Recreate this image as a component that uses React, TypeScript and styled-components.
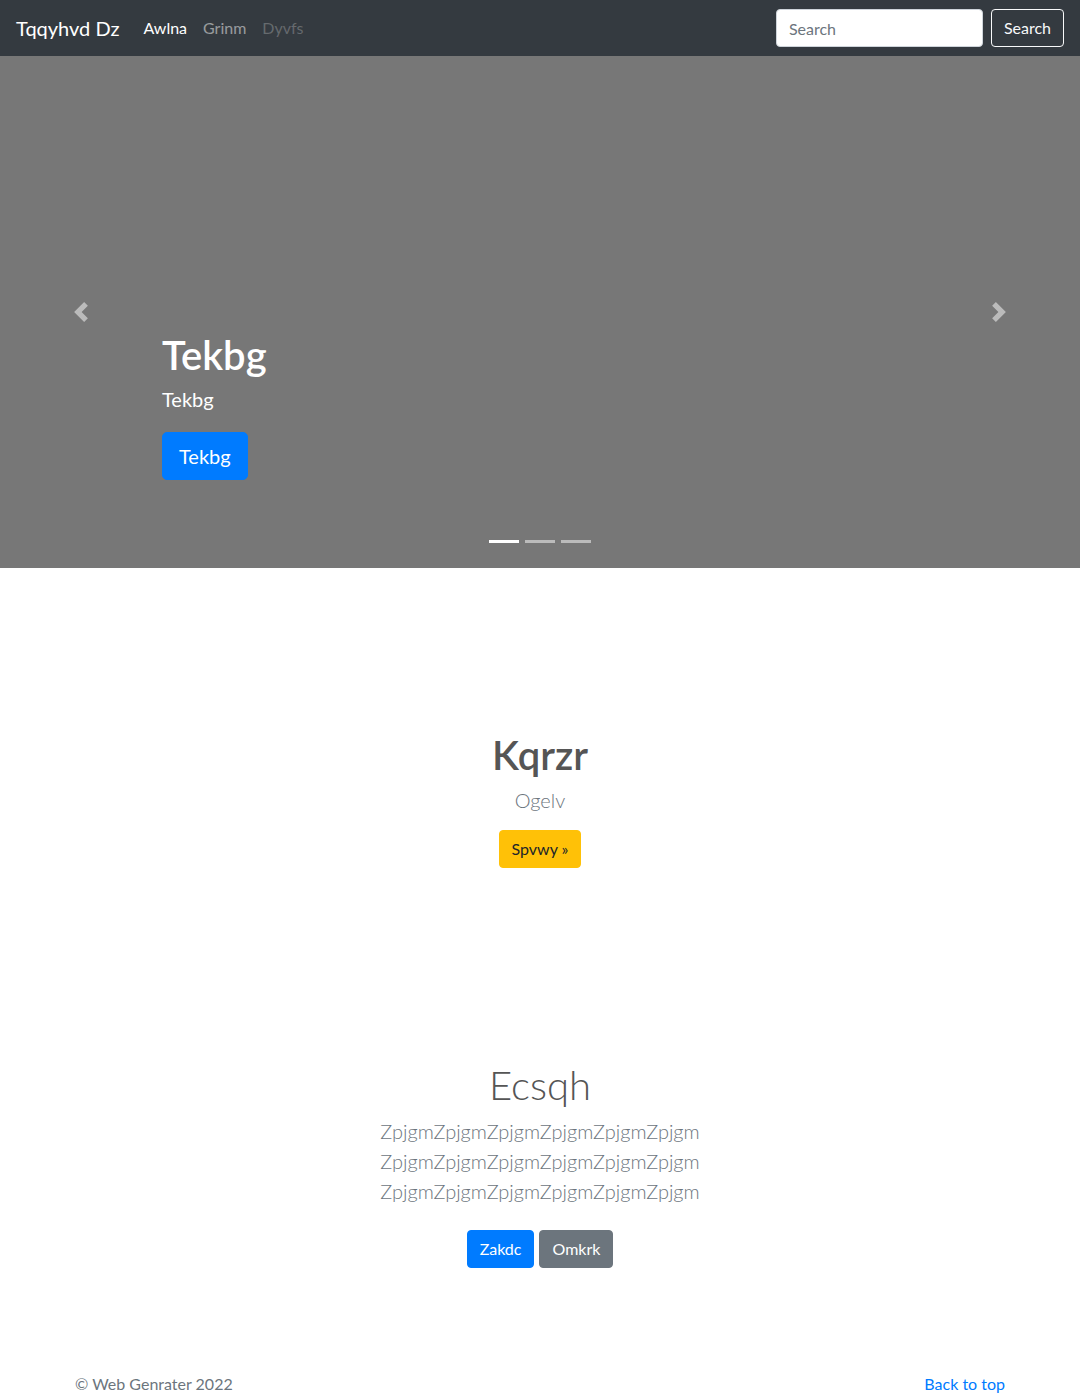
import React from 'react';
import styled, { createGlobalStyle, css } from 'styled-components';

const GlobalStyle = createGlobalStyle`
  * { box-sizing: border-box; }
  body {
    margin: 0;
    font-family: Lato, "Noto Sans", "Liberation Sans", sans-serif;
    font-size: 16px;
    line-height: 1.5;
    color: #212529;
    background: #fff;
  }
`;

const Navbar = styled.nav`
  height: 56px;
  background: #343a40;
  padding: 8px 16px;
  display: flex;
  align-items: center;
  justify-content: space-between;
`;

const NavLeft = styled.div`
  display: flex;
  align-items: center;
`;

const Brand = styled.a`
  color: #fff;
  font-size: 20px;
  line-height: 30px;
  margin-right: 16px;
  text-decoration: none;
`;

const NavLink = styled.a<{ $state?: 'active' | 'disabled' }>`
  padding: 8px;
  text-decoration: none;
  color: rgba(255, 255, 255, 0.5);
  ${({ $state }) =>
    $state === 'active' &&
    css`
      color: #fff;
    `}
  ${({ $state }) =>
    $state === 'disabled' &&
    css`
      color: rgba(255, 255, 255, 0.25);
    `}
`;

const SearchForm = styled.form`
  display: flex;
  align-items: center;
  gap: 8px;
`;

const SearchInput = styled.input`
  width: 207px;
  height: 38px;
  padding: 6px 12px;
  font: inherit;
  color: #495057;
  border: 1px solid #ced4da;
  border-radius: 4px;
  background: #fff;
  &::placeholder { color: #6c757d; }
`;

const OutlineButton = styled.button`
  height: 38px;
  padding: 6px 12px;
  font: inherit;
  color: #f8f9fa;
  background: transparent;
  border: 1px solid #f8f9fa;
  border-radius: 4px;
`;

const Carousel = styled.div`
  position: relative;
  height: 512px;
  background: #777;
`;

const Control = styled.a<{ $side: 'prev' | 'next' }>`
  position: absolute;
  top: 0;
  bottom: 0;
  width: 15%;
  display: flex;
  align-items: center;
  justify-content: center;
  opacity: 0.5;
  ${({ $side }) => ($side === 'prev' ? 'left: 0;' : 'right: 0;')}
  svg { width: 20px; height: 20px; }
`;

const Caption = styled.div`
  position: absolute;
  left: 15%;
  right: 15%;
  bottom: 88px;
  color: #fff;
  text-align: left;
`;

const CaptionTitle = styled.h1`
  margin: 0 0 5px;
  font-size: 40px;
  line-height: 48px;
  font-weight: 600;
`;

const CaptionText = styled.p`
  margin: 0 0 18px;
  font-size: 20px;
  line-height: 30px;
`;

const Indicators = styled.ol`
  position: absolute;
  left: 0;
  right: 0;
  bottom: 25px;
  margin: 0;
  padding: 0;
  list-style: none;
  display: flex;
  justify-content: center;
  gap: 6px;
`;

const Indicator = styled.li<{ $active?: boolean }>`
  width: 30px;
  height: 3px;
  background: #fff;
  opacity: ${({ $active }) => ($active ? 1 : 0.5)};
`;

const Button = styled.a<{ $variant: 'primary' | 'secondary' | 'warning'; $large?: boolean }>`
  display: inline-block;
  padding: 6px 12px;
  font-size: 16px;
  line-height: 24px;
  border: 1px solid #007bff;
  border-radius: 4px;
  text-decoration: none;
  color: #fff;
  background: #007bff;
  ${({ $variant }) =>
    $variant === 'secondary' &&
    css`
      background: #6c757d;
      border-color: #6c757d;
    `}
  ${({ $variant }) =>
    $variant === 'warning' &&
    css`
      background: #ffc107;
      border-color: #ffc107;
      color: #212529;
    `}
  ${({ $large }) =>
    $large &&
    css`
      padding: 8px 16px;
      font-size: 20px;
      line-height: 30px;
      border-radius: 5px;
    `}
`;

const Section = styled.section<{ $top: number; $bottom: number }>`
  padding: ${({ $top, $bottom }) => `${$top}px 15px ${$bottom}px`};
  text-align: center;
`;

const Inner = styled.div`
  max-width: 450px;
  margin: 0 auto;
`;

const Heading = styled.h1<{ $light?: boolean }>`
  margin: 0 0 ${({ $light }) => ($light ? 7 : 6)}px;
  font-size: 40px;
  line-height: 48px;
  font-weight: ${({ $light }) => ($light ? 300 : 600)};
  color: #555;
`;

const Lead = styled.p<{ $gap?: number }>`
  margin: 0 0 ${({ $gap }) => $gap ?? 15}px;
  font-size: 20px;
  line-height: 30px;
  font-weight: 300;
  color: #6c757d;
`;

const ButtonRow = styled.p`
  margin: 0;
  display: flex;
  justify-content: center;
  gap: 5px;
`;

const Footer = styled.footer`
  padding: 0 15px 48px;
`;

const FooterInner = styled.div`
  max-width: 930px;
  margin: 0 auto;
  display: flex;
  justify-content: space-between;
  color: #6c757d;
`;

const FooterLink = styled.a`
  color: #007bff;
  text-decoration: none;
`;

const Chevron = ({ dir }: { dir: 'prev' | 'next' }) => (
  <svg viewBox="0 0 8 8" fill="#fff">
    {dir === 'prev' ? (
      <path d="M5.25 0l-4 4 4 4 1.5-1.5L4.25 4l2.5-2.5L5.25 0z" />
    ) : (
      <path d="M2.75 0l-1.5 1.5L3.75 4l-2.5 2.5L2.75 8l4-4-4-4z" />
    )}
  </svg>
);

const lines = Array.from({ length: 3 }, () => 'Zpjgm'.repeat(6)).join(' ');

export default function App() {
  return (
    <>
      <GlobalStyle />
      <Navbar>
        <NavLeft>
          <Brand href="#">Tqqyhvd Dz</Brand>
          <NavLink href="#" $state="active">Awlna</NavLink>
          <NavLink href="#">Grinm</NavLink>
          <NavLink href="#" $state="disabled">Dyvfs</NavLink>
        </NavLeft>
        <SearchForm onSubmit={(e) => e.preventDefault()}>
          <SearchInput placeholder="Search" />
          <OutlineButton type="submit">Search</OutlineButton>
        </SearchForm>
      </Navbar>

      <Carousel>
        <Control $side="prev" href="#"><Chevron dir="prev" /></Control>
        <Control $side="next" href="#"><Chevron dir="next" /></Control>
        <Caption>
          <CaptionTitle>Tekbg</CaptionTitle>
          <CaptionText>Tekbg</CaptionText>
          <Button $variant="primary" $large href="#">Tekbg</Button>
        </Caption>
        <Indicators>
          <Indicator $active />
          <Indicator />
          <Indicator />
        </Indicators>
      </Carousel>

      <Section $top={163} $bottom={97}>
        <Heading>Kqrzr</Heading>
        <Lead>Ogelv</Lead>
        <ButtonRow>
          <Button $variant="warning" href="#">Spvwy »</Button>
        </ButtonRow>
      </Section>

      <Section $top={96} $bottom={104}>
        <Inner>
          <Heading $light>Ecsqh</Heading>
          <Lead $gap={24}>{lines}</Lead>
          <ButtonRow>
            <Button $variant="primary" href="#">Zakdc</Button>
            <Button $variant="secondary" href="#">Omkrk</Button>
          </ButtonRow>
        </Inner>
      </Section>

      <Footer>
        <FooterInner>
          <span>© Web Genrater 2022</span>
          <FooterLink href="#">Back to top</FooterLink>
        </FooterInner>
      </Footer>
    </>
  );
}
